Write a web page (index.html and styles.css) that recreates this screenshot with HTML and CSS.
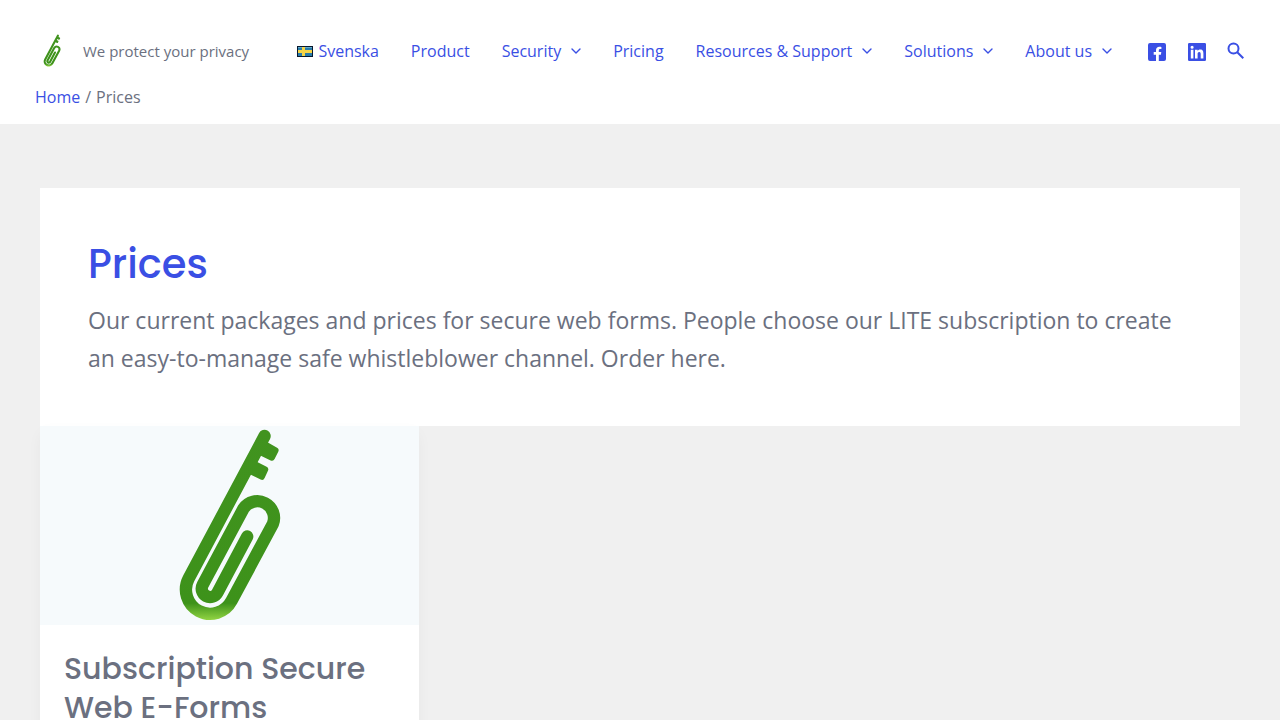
FILE: index.html
```html
<!DOCTYPE html>
<html lang="en">
<head>
<meta charset="utf-8">
<meta name="viewport" content="width=device-width, initial-scale=1">
<title>Prices</title>
<link rel="stylesheet" href="styles.css">
</head>
<body>
<svg class="defs" aria-hidden="true">
  <defs>
    <linearGradient id="green" gradientUnits="userSpaceOnUse" x1="0" y1="30" x2="0" y2="600">
      <stop offset="0" stop-color="#41931f"/>
      <stop offset="0.91" stop-color="#3d921a"/>
      <stop offset="1" stop-color="#93d544"/>
    </linearGradient>
    <symbol id="key" viewBox="78 18 320 590">
      <g fill="none" stroke="url(#green)" stroke-width="37" stroke-linecap="round" stroke-linejoin="round">
        <path d="M343 48L116 474A72 72 0 0 0 244 542L368 311A50 50 0 0 0 280 265L158 493A25 25 0 0 0 202 517L291 349"/>
      </g>
      <g fill="url(#green)" stroke="url(#green)" stroke-width="18" stroke-linejoin="round">
        <path d="M346 74L376 91L365 113L325 94Z"/>
        <path d="M314 132L345 148L335 170L295 151Z"/>
      </g>
    </symbol>
    <symbol id="chevron" viewBox="0 0 10 6"><path d="M1 1l4 4 4-4" fill="none" stroke="currentColor" stroke-width="1.4" stroke-linecap="round" stroke-linejoin="round"/></symbol>
  </defs>
</svg>
<header class="site-header">
  <div class="bar">
    <div class="brand">
      <a class="logo" href="#" aria-label="Start page"><svg width="18" height="33" aria-hidden="true"><use href="#key"/></svg></a>
      <p class="tagline">We protect your privacy</p>
    </div>
    <nav class="menu" aria-label="Main">
      <a href="#"><svg class="flag" viewBox="0 0 16 11" aria-hidden="true"><path fill="#07182f" d="M0 0h16v11H0z"/><path fill="#287cab" d="M1 1h14v9H1z"/><path fill="#65abc9" d="M1 1h14v1H1z"/><path fill="#f5d547" d="M5 1h3v9H5zM1 4h14v3H1z"/></svg>Svenska</a>
      <a href="#">Product</a>
      <a href="#">Security<svg class="chevron" aria-hidden="true"><use href="#chevron"/></svg></a>
      <a href="#">Pricing</a>
      <a href="#">Resources &amp; Support<svg class="chevron" aria-hidden="true"><use href="#chevron"/></svg></a>
      <a href="#">Solutions<svg class="chevron" aria-hidden="true"><use href="#chevron"/></svg></a>
      <a href="#">About us<svg class="chevron" aria-hidden="true"><use href="#chevron"/></svg></a>
    </nav>
    <div class="actions">
      <a href="#" aria-label="Facebook"><svg width="18" height="18" viewBox="0 0 18 18" aria-hidden="true"><path fill="currentColor" d="M2 0h14a2 2 0 0 1 2 2v14a2 2 0 0 1-2 2h-5.200v-6.300h2.100l.4-2.600h-2.500V7.500c0-.8.400-1.400 1.500-1.400h1.100V3.900s-1-.2-2-.2c-2.100 0-3.400 1.200-3.400 3.500v1.900H5.700v2.600H8V18H2a2 2 0 0 1-2-2V2a2 2 0 0 1 2-2z"/></svg></a>
      <a href="#" aria-label="LinkedIn"><svg width="18" height="18" viewBox="0 0 18 18" aria-hidden="true"><path fill="currentColor" fill-rule="evenodd" d="M1.300 0h15.400A1.300 1.300 0 0 1 18 1.300v15.400a1.300 1.300 0 0 1-1.300 1.300H1.300A1.300 1.300 0 0 1 0 16.700V1.300A1.300 1.300 0 0 1 1.300 0zM2.800 6.800v8.600h2.600V6.800zM4.100 2.700a1.500 1.500 0 1 0 0 3.100 1.500 1.500 0 0 0 0-3.100zM7 6.800v8.600h2.600v-4.200c0-1.200.3-2.200 1.600-2.200 1.400 0 1.500 1.300 1.500 2.300v4.100h2.700v-4.700c0-2.300-.5-4.100-3.200-4.100-1.300 0-2.200.7-2.600 1.400V6.800z"/></svg></a>
      <button class="search" type="button" aria-label="Search"><svg width="18" height="18" viewBox="0 0 18 18" aria-hidden="true"><g fill="none" stroke="currentColor" stroke-width="2"><circle cx="6.500" cy="6.500" r="5"/><path d="M10.300 10.300l6 6"/></g></svg></button>
    </div>
  </div>
  <nav class="breadcrumbs" aria-label="Breadcrumbs"><a href="#">Home</a><span>/</span><span>Prices</span></nav>
</header>
<main class="content">
  <section class="intro">
    <h1>Prices</h1>
    <p>Our current packages and prices for secure web forms. People choose our LITE subscription to create an easy-to-manage safe whistleblower channel. Order here.</p>
  </section>
  <div class="cards">
    <article class="card">
      <div class="picture"><svg role="img" aria-label="Green paper clip shaped as a key" width="107" height="197"><use href="#key"/></svg></div>
      <h2>Subscription Secure Web E-Forms</h2>
    </article>
  </div>
</main>
</body>
</html>
```
FILE: styles.css
```css
* { box-sizing: border-box; }
body {
  margin: 0;
  background: #f0f0f0;
  color: #6b7080;
  font: 16px/24px "Open Sans", sans-serif;
}
a { color: #3a4fe4; text-decoration: none; }
h1, h2, p { margin: 0; }
h1, h2 { font-family: Poppins, Inter, sans-serif; font-weight: 500; }
.defs { position: absolute; width: 0; height: 0; }

.site-header { background: #fff; padding: 16px 35px 15px; }
.bar { display: flex; align-items: center; height: 69px; }
.brand { display: flex; align-items: center; gap: 22px; padding-left: 8px; }
.logo { display: flex; }
.tagline { font-size: 15px; white-space: nowrap; }
.menu { display: flex; gap: 32px; margin-left: auto; white-space: nowrap; }
.menu a { display: flex; align-items: center; }
.flag { width: 16px; height: 11px; margin: 2px 5px 0 0; }
.chevron { width: 10px; height: 6px; margin-left: 10px; }
.actions { display: flex; align-items: center; gap: 22px; margin: 2px 0 0 36px; }
.actions a, .search { display: flex; }
.search { padding: 0 0 2px; margin-left: -1px; border: 0; background: none; color: #3a4fe4; }
.breadcrumbs { display: flex; gap: 5px; }

.content { padding: 64px 40px 0; }
.intro { background: #fff; padding: 48px 48px 49px; }
.intro h1 { color: #3a4fe4; font-size: 40px; line-height: 56px; margin-bottom: 9px; }
.intro p { font-size: 23px; line-height: 38px; }
.cards { display: grid; grid-template-columns: repeat(3, 1fr); gap: 31px; }
.card { background: #fff; box-shadow: 0 6px 15px -2px rgba(16, 24, 40, 0.05); padding-bottom: 24px; }
.picture { display: flex; justify-content: center; background: #f6fafc; height: 199px; }
.card h2 { padding: 24px 24px 0; font-size: 30px; line-height: 39px; }
```
